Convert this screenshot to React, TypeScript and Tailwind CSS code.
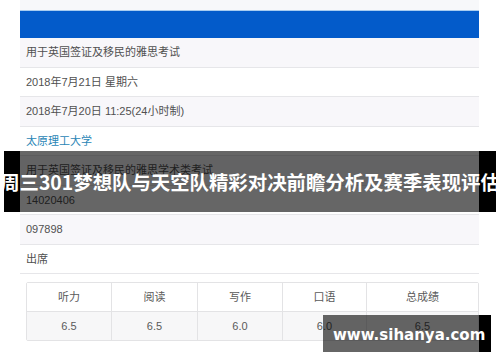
import React from 'react';

const rows = [
  { text: '用于英国签证及移民的雅思考试', light: true },
  { text: '2018年7月21日 星期六', light: false },
  { text: '2018年7月20日 11:25(24小时制)', light: true },
  { text: '太原理工大学', light: false, link: true },
  { text: '用于英国签证及移民的雅思学术类考试', light: true },
  { text: '14020406', light: false },
  { text: '097898', light: true },
  { text: '出席', light: false },
];

const scores = [
  { label: '听力', value: '6.5', w: 'w-[85px]' },
  { label: '阅读', value: '6.5', w: 'w-[86px]' },
  { label: '写作', value: '6.0', w: 'w-[85px]' },
  { label: '口语', value: '6.0', w: 'w-[84px]' },
  { label: '总成绩', value: '6.5', w: 'flex-1' },
];

const App: React.FC = () => {
  return (
    <div className="relative w-[500px] h-[362px] overflow-hidden bg-white font-['Liberation_Sans','Noto_Sans_CJK_SC',sans-serif]">
      {/* Phone screenshot */}
      <div className="ml-[20px] w-[459px] flex flex-col">
        <div className="h-[10px] bg-[#f7f8fa]" />
        <div className="h-[28px] bg-[#035bca] border-t border-[#a9cdf0]" />
        {rows.map((r, i) => (
          <div
            key={i}
            className={`h-[29.5px] flex items-center px-[6px] border-b border-[#e6e6e9] text-[11px] ${
              r.light ? 'bg-[#f8f7fa]' : 'bg-white'
            } ${r.link ? 'text-[#2a86b6]' : 'text-[#505050]'}`}
          >
            {r.text}
          </div>
        ))}
        <div className="pl-[6px] pt-[8px]">
          <div className="border border-[#e3e3e5] rounded-[2px] text-[11px] text-[#5a5a5a]">
            <div className="flex h-[29px] bg-white border-b border-[#e3e3e5]">
              {scores.map((s, i) => (
                <div key={i} className={`${s.w} flex items-center justify-center ${i < 4 ? 'border-r border-[#e3e3e5]' : ''}`}>
                  {s.label}
                </div>
              ))}
            </div>
            <div className="flex h-[28px] bg-[#f7f7f8]">
              {scores.map((s, i) => (
                <div key={i} className={`${s.w} flex items-center justify-center ${i < 4 ? 'border-r border-[#e3e3e5]' : ''}`}>
                  {s.value}
                </div>
              ))}
            </div>
          </div>
          <div className="pt-[19px] text-[12px] text-[#2a86b6]">如果您对考试成绩有疑问请联系考场</div>
        </div>
      </div>

      {/* Caption band */}
      <div className="absolute left-[4px] top-[151px] w-[492px] h-[61px] flex">
        <div className="w-[16px] bg-black" />
        <div className="w-[459px] bg-black/60" />
        <div className="flex-1 bg-black" />
      </div>
      <div className="absolute left-0 top-[151px] w-[500px] h-[61px] flex items-center justify-center">
        <span className="text-white font-bold text-[19.4px] whitespace-nowrap font-['Noto_Sans_CJK_SC',sans-serif]">
          周三301梦想队与天空队精彩对决前瞻分析及赛季表现评估
        </span>
      </div>

      {/* Watermark */}
      <div className="absolute left-[323px] top-[315px] w-[168px] h-[37px] flex">
        <div className="w-[156px] bg-black/60" />
        <div className="flex-1 bg-black" />
      </div>
      <div className="absolute left-[333px] top-[315px] h-[37px] flex items-center pt-[4px]">
        <span className="text-white font-bold text-[15px] whitespace-nowrap font-['DejaVu_Sans',sans-serif]">
          www.sihanya.com
        </span>
      </div>
    </div>
  );
};

export default App;
